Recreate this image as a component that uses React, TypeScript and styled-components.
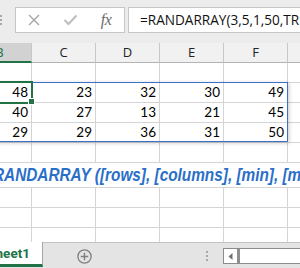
import React from 'react';
import styled, { createGlobalStyle } from 'styled-components';

const GlobalStyle = createGlobalStyle`
  html, body {
    margin: 0;
    padding: 0;
    background: #ffffff;
    overflow: hidden;
  }
  body {
    font-family: 'Open Sans', 'Liberation Sans', sans-serif;
  }
`;

const Window = styled.div`
  position: relative;
  width: 300px;
  height: 268px;
  overflow: hidden;
  display: flex;
  flex-direction: column;
  background: #ffffff;
`;

// ---- formula bar ----

const FormulaBar = styled.div`
  flex: none;
  height: 43px;
  box-sizing: border-box;
  padding-top: 7px;
  display: flex;
  align-items: flex-start;
  background: #ececec;
`;

const Grip = styled.div`
  width: 2px;
  margin-top: 8px;
  display: flex;
  flex-direction: column;
  gap: 2px;

  span {
    width: 2px;
    height: 2px;
    background: #a8a8a8;
  }
`;

const ButtonBox = styled.div`
  flex: none;
  margin-left: 13px;
  width: 110px;
  height: 26px;
  box-sizing: border-box;
  border: 1px solid #c6c6c6;
  background: #ffffff;
  display: flex;
  align-items: center;
`;

const IconSlot = styled.div`
  flex: none;
  width: 36px;
  height: 24px;
  display: flex;
  align-items: center;
  justify-content: center;
`;

const FxLabel = styled.span`
  font-family: 'Liberation Serif', 'DejaVu Serif', serif;
  font-style: italic;
  font-size: 16px;
  color: #6b6b6b;
  letter-spacing: -0.5px;
`;

const FormulaInput = styled.div`
  flex: none;
  margin-left: 3px;
  width: 220px;
  height: 26px;
  box-sizing: border-box;
  border: 1px solid #c6c6c6;
  border-right: none;
  background: #ffffff;
  padding-left: 11px;
  font-family: 'Open Sans', sans-serif;
  font-size: 13.6px;
  line-height: 24px;
  color: #111111;
  white-space: nowrap;
  overflow: hidden;
`;

// ---- column headers ----

const HeaderRow = styled.div`
  flex: none;
  height: 20px;
  display: flex;
  margin-left: -32px;
`;

const HeaderCell = styled.div<{ $selected?: boolean }>`
  flex: none;
  width: 64px;
  height: 20px;
  box-sizing: border-box;
  border-right: 1px solid #c8c8c8;
  border-bottom: ${p => (p.$selected ? '2px solid #217346' : '1px solid #b4b4b4')};
  background: ${p => (p.$selected ? '#d2d2d2' : '#f1f1f1')};
  color: ${p => (p.$selected ? '#217346' : '#222222')};
  font-family: 'Open Sans', sans-serif;
  font-size: 13px;
  line-height: 19px;
  text-align: center;
`;

// ---- sheet grid ----

const Sheet = styled.div`
  position: relative;
  flex: 1;
  overflow: hidden;
`;

const GridRow = styled.div`
  display: flex;
  height: 20px;
  margin-left: -32px;
`;

const Cell = styled.div`
  flex: none;
  width: 64px;
  height: 20px;
  box-sizing: border-box;
  border-right: 1px solid #d4d4d4;
  border-bottom: 1px solid #d4d4d4;
  padding: 0 3px 2px 0;
  display: flex;
  align-items: flex-end;
  justify-content: flex-end;
  font-family: Lato, 'Liberation Sans', sans-serif;
  font-size: 13.5px;
  line-height: 15px;
  color: #000000;
`;

const LabelStrip = styled.div`
  height: 25px;
  box-sizing: border-box;
  border-bottom: 1px solid #d4d4d4;
  background: #ffffff;
  display: flex;
  align-items: center;
  overflow: hidden;
`;

const LabelText = styled.span`
  margin-left: -7px;
  white-space: nowrap;
  font-family: 'Liberation Sans', Arial, sans-serif;
  font-weight: bold;
  font-style: italic;
  font-size: 18.5px;
  color: #2a6fc8;
  transform: scaleX(0.83);
  transform-origin: left center;
`;

const SpillOutline = styled.div`
  position: absolute;
  left: -40px;
  top: 19px;
  width: 328px;
  height: 60px;
  box-sizing: border-box;
  border: 1px solid #3f6fc6;
  box-shadow: 1px 1px 4px rgba(0, 0, 0, 0.22);
  pointer-events: none;
`;

const ActiveCell = styled.div`
  position: absolute;
  left: -40px;
  top: 18px;
  width: 73px;
  height: 23px;
  box-sizing: border-box;
  border: 2px solid #217346;
`;

const FillHandle = styled.div`
  position: absolute;
  left: 28px;
  top: 35px;
  width: 5px;
  height: 5px;
  background: #217346;
  border: 1px solid #ffffff;
`;

// ---- sheet tabs ----

const TabBar = styled.div`
  flex: none;
  height: 26px;
  display: flex;
  background: #e4e4e4;
`;

const SheetTab = styled.div`
  flex: none;
  width: 43px;
  height: 25px;
  box-sizing: border-box;
  background: #ffffff;
  border-right: 1px solid #a6a6a6;
  border-bottom: 3px solid #217346;
  padding-right: 12px;
  display: flex;
  align-items: center;
  justify-content: flex-end;
  overflow: hidden;
  white-space: nowrap;
  font-family: Roboto, 'Open Sans', sans-serif;
  font-weight: bold;
  font-size: 13.5px;
  color: #217346;
`;

const TabRest = styled.div`
  flex: 1;
  box-sizing: border-box;
  border-top: 1px solid #c2c2c2;
  display: flex;
  align-items: flex-start;
`;

const AddSheet = styled.div`
  flex: none;
  margin: 6px 0 0 34px;
  width: 15px;
  height: 15px;
  display: flex;
`;

const Splitter = styled.div`
  flex: none;
  margin: 8px 0 0 114px;
  display: flex;
  flex-direction: column;
  gap: 2px;

  span {
    width: 2px;
    height: 2px;
    background: #a8a8a8;
  }
`;

const HScroll = styled.div`
  flex: none;
  margin: 5px 0 0 15px;
  width: 120px;
  height: 16px;
  box-sizing: border-box;
  border: 1px solid #8c8c8c;
  background: #ffffff;
  display: flex;
`;

const ScrollArrow = styled.div`
  flex: none;
  width: 13px;
  display: flex;
  align-items: center;
  justify-content: center;
`;

const ScrollThumbEdge = styled.div`
  flex: none;
  width: 3px;
  background: #8e8e8e;
`;

const columns = ['B', 'C', 'D', 'E', 'F', 'G'];

const values: number[][] = [
  [48, 23, 32, 30, 49],
  [40, 27, 13, 21, 45],
  [29, 29, 36, 31, 50],
];

const EmptyRow: React.FC = () => (
  <GridRow>
    {columns.map(c => (
      <Cell key={c} />
    ))}
  </GridRow>
);

export default function App() {
  return (
    <Window>
      <GlobalStyle />
      <FormulaBar>
        <Grip>
          <span />
          <span />
          <span />
        </Grip>
        <ButtonBox>
          <IconSlot>
            <svg width="12" height="12" viewBox="0 0 12 12">
              <path d="M1 1 L11 11 M11 1 L1 11" stroke="#a6a6a6" strokeWidth="1.4" fill="none" />
            </svg>
          </IconSlot>
          <IconSlot>
            <svg width="15" height="12" viewBox="0 0 15 12">
              <path d="M1.5 6 L5.5 10 L13.5 1.5" stroke="#bdbdbd" strokeWidth="2" fill="none" />
            </svg>
          </IconSlot>
          <IconSlot>
            <FxLabel>fx</FxLabel>
          </IconSlot>
        </ButtonBox>
        <FormulaInput>=RANDARRAY(3,5,1,50,TRUE)</FormulaInput>
      </FormulaBar>

      <HeaderRow>
        {columns.map((c, i) => (
          <HeaderCell key={c} $selected={i === 0}>
            {c}
          </HeaderCell>
        ))}
      </HeaderRow>

      <Sheet>
        <EmptyRow />
        {values.map((row, r) => (
          <GridRow key={r}>
            {columns.map((c, i) => (
              <Cell key={c}>{row[i] ?? ''}</Cell>
            ))}
          </GridRow>
        ))}
        <EmptyRow />
        <LabelStrip>
          <LabelText>RANDARRAY ([rows], [columns], [min], [max], [integer])</LabelText>
        </LabelStrip>
        <EmptyRow />
        <EmptyRow />
        <EmptyRow />

        <SpillOutline />
        <ActiveCell />
        <FillHandle />
      </Sheet>

      <TabBar>
        <SheetTab>Sheet1</SheetTab>
        <TabRest>
          <AddSheet>
            <svg width="15" height="15" viewBox="0 0 15 15">
              <circle cx="7.5" cy="7.5" r="6.6" stroke="#7f7f7f" strokeWidth="1.3" fill="none" />
              <path d="M7.5 3.8 V11.2 M3.8 7.5 H11.2" stroke="#7f7f7f" strokeWidth="1.4" />
            </svg>
          </AddSheet>
          <Splitter>
            <span />
            <span />
            <span />
          </Splitter>
          <HScroll>
            <ScrollArrow>
              <svg width="5" height="7" viewBox="0 0 5 7">
                <path d="M4.5 0 L0.5 3.5 L4.5 7 Z" fill="#6f6f6f" />
              </svg>
            </ScrollArrow>
            <ScrollThumbEdge />
          </HScroll>
        </TabRest>
      </TabBar>
    </Window>
  );
}
